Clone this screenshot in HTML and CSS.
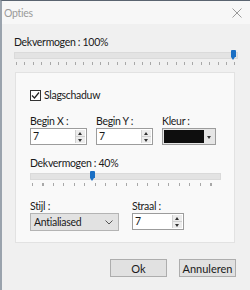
FILE: index.html
```html
<!DOCTYPE html>
<html lang="nl">
<head>
    <meta charset="UTF-8">
    <title>Opties</title>
    <link rel="stylesheet" href="styles.css">
</head>
<body>
    <div class="window">
        <div class="titlebar">
            <span class="title">Opties</span>
            <svg class="close" width="10" height="10" viewBox="0 0 10 10"><path d="M0.5 0.5 L9.5 9.5 M9.5 0.5 L0.5 9.5" stroke="#9a9a9a" stroke-width="1"/></svg>
        </div>

        <div class="content">
            <div class="label top-label">Dekvermogen : 100%</div>
            <div class="slider wide">
                <div class="track"></div>
                <div class="thumb" style="left: 100%"></div>
                <div class="ticks"></div>
            </div>

            <div class="panel">
                <label class="check">
                    <span class="box"><svg width="9" height="9" viewBox="0 0 9 9"><path d="M1 4.5 L3.5 7 L8 1.5" fill="none" stroke="#222" stroke-width="1.2"/></svg></span>
                    Slagschaduw
                </label>

                <div class="row">
                    <div class="field">
                        <div class="label">Begin X :</div>
                        <div class="spin w57">
                            <span class="value">7</span>
                            <span class="arrows"><i class="up"></i><i class="down"></i></span>
                        </div>
                    </div>
                    <div class="field">
                        <div class="label">Begin Y :</div>
                        <div class="spin w57">
                            <span class="value">7</span>
                            <span class="arrows"><i class="up"></i><i class="down"></i></span>
                        </div>
                    </div>
                    <div class="field">
                        <div class="label">Kleur :</div>
                        <div class="colorpick">
                            <span class="swatch"></span>
                            <span class="drop"><i class="down"></i></span>
                        </div>
                    </div>
                </div>

                <div class="label mid-label">Dekvermogen : 40%</div>
                <div class="slider narrow">
                    <div class="track"></div>
                    <div class="thumb" style="left: 35%"></div>
                    <div class="ticks"></div>
                </div>

                <div class="row row2">
                    <div class="field">
                        <div class="label">Stijl :</div>
                        <div class="combo">
                            <span>Antialiased</span>
                            <svg width="8" height="5" viewBox="0 0 8 5"><path d="M0.5 0.5 L4 4 L7.5 0.5" fill="none" stroke="#555" stroke-width="1"/></svg>
                        </div>
                    </div>
                    <div class="field">
                        <div class="label">Straal :</div>
                        <div class="spin w52">
                            <span class="value">7</span>
                            <span class="arrows"><i class="up"></i><i class="down"></i></span>
                        </div>
                    </div>
                </div>
            </div>

            <div class="buttons">
                <button class="btn">Ok</button>
                <button class="btn">Annuleren</button>
            </div>
        </div>
    </div>
</body>
</html>
```

FILE: styles.css
```css
body {
    margin: 0;
    font-family: Lato, "Noto Sans", sans-serif;
    font-size: 10.5px;
    letter-spacing: -0.3px;
    color: #1a1a1a;
}

.window {
    width: 250px;
    height: 290px;
    box-sizing: border-box;
    background-color: #f0f0f0;
    border-left: 2px solid #9aa3ad;
    border-top: 1px solid #5a6470;
}

.titlebar {
    height: 23px;
    display: flex;
    align-items: center;
    justify-content: space-between;
    padding: 0 8px 0 2px;
    background-color: #f7f7f7;
}

.title {
    color: #9a9a9a;
}

.content {
    padding: 11px 12px 0 12px;
}

.label {
    line-height: 14px;
}

/* sliders */
.slider {
    position: relative;
    height: 16px;
}

.slider .track {
    position: absolute;
    left: 0;
    right: 0;
    top: 2px;
    height: 5px;
    background-color: #e3e3e3;
    border: 1px solid #dadada;
}

.slider .thumb {
    position: absolute;
    top: 0;
    width: 5px;
    height: 7px;
    margin-left: -7px;
    background-color: #1a6fc4;
    border-radius: 1px 1px 0 0;
}

.slider .thumb::after {
    content: "";
    position: absolute;
    left: 0;
    top: 7px;
    border-left: 2.5px solid transparent;
    border-right: 2.5px solid transparent;
    border-top: 3px solid #1a6fc4;
}

.slider .ticks {
    position: absolute;
    left: 2px;
    right: 2px;
    top: 12px;
    height: 3px;
    background-image: repeating-linear-gradient(to right, #a8a8a8 0 1px, transparent 1px 8.4px);
}

.slider.wide {
    margin: 1px 0 0 0;
    width: 224px;
}

.slider.narrow {
    margin: 1px 0 0 0;
    width: 191px;
}

.slider.narrow .ticks {
    background-image: repeating-linear-gradient(to right, #a8a8a8 0 1px, transparent 1px 10.5px);
}

/* panel */
.panel {
    margin: 6px 0 0 1px;
    width: 220px;
    height: 171px;
    box-sizing: border-box;
    background-color: #f9f9f9;
    border: 1px solid #e2e2e2;
    padding: 15px 0 0 14px;
}

.check {
    display: flex;
    align-items: center;
    gap: 3px;
    height: 14px;
}

.box {
    width: 9px;
    height: 9px;
    border: 1px solid #333;
    background-color: #fff;
    display: flex;
    align-items: center;
    justify-content: center;
}

.row {
    display: flex;
    gap: 9px;
    margin-top: 12px;
}

.row2 {
    margin-top: 12px;
    gap: 13px;
}

.spin {
    height: 17px;
    box-sizing: border-box;
    border: 1px solid #9c9c9c;
    background-color: #fff;
    display: flex;
    justify-content: space-between;
}

.w57 {
    width: 57px;
}

.w52 {
    width: 52px;
}

.value {
    padding-left: 2px;
    line-height: 15px;
}

.arrows {
    width: 9px;
    display: flex;
    flex-direction: column;
    border-left: 1px solid #d0d0d0;
    margin: 1px 1px 1px 0;
}

.arrows i {
    flex: 1;
    background-color: #ececec;
    position: relative;
}

.arrows i + i {
    border-top: 1px solid #d0d0d0;
}

.arrows i::after,
.drop i::after {
    content: "";
    position: absolute;
    left: 2px;
    top: 2px;
    border-left: 2.5px solid transparent;
    border-right: 2.5px solid transparent;
}

.arrows .up::after {
    border-bottom: 3px solid #333;
}

.arrows .down::after,
.drop .down::after {
    border-top: 3px solid #333;
}

.colorpick {
    width: 54px;
    height: 17px;
    box-sizing: border-box;
    border: 1px solid #9c9c9c;
    background-color: #e6e6e6;
    display: flex;
}

.swatch {
    flex: 1;
    background-color: #0e0e0e;
    margin: 1px;
}

.drop {
    width: 10px;
    position: relative;
}

.drop i {
    position: absolute;
    left: 0;
    top: 5px;
    width: 10px;
}

.mid-label {
    margin-top: 11px;
}

.combo {
    width: 89px;
    height: 18px;
    box-sizing: border-box;
    border: 1px solid #b4b4b4;
    background-color: #e2e2e2;
    display: flex;
    align-items: center;
    justify-content: space-between;
    padding: 0 5px 0 3px;
}

/* buttons */
.buttons {
    display: flex;
    justify-content: flex-end;
    gap: 12px;
    margin: 16px 2px 0 0;
}

.btn {
    width: 57px;
    height: 18px;
    font-family: inherit;
    font-size: 11px;
    letter-spacing: 0;
    color: #1a1a1a;
    background-color: #e1e1e1;
    border: 1px solid #adadad;
    padding: 0;
}
```
